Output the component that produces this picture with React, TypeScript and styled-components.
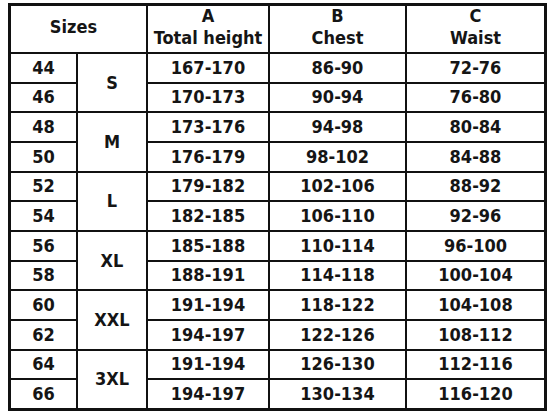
import React from "react";
import styled, { createGlobalStyle } from "styled-components";

const Global = createGlobalStyle`
  html, body { margin: 0; padding: 0; background: #ffffff; }
  body { width: 554px; height: 415px; overflow: hidden; }
`;

const Page = styled.div`
  padding: 3px 0 0 8px;
`;

const Chart = styled.div`
  display: grid;
  grid-template-columns: 65px 68px 120px 135px 137px;
  grid-template-rows: 46px repeat(12, 1fr);
  gap: 2px;
  width: 539px;
  height: 408px;
  box-sizing: border-box;
  padding: 3px;
  background: #111111;
  font-family: "DejaVu Sans Condensed", "DejaVu Sans", sans-serif;
  font-weight: bold;
  font-size: 18px;
  color: #151515;
`;

const Cell = styled.div<{ $span?: number; $rows?: number }>`
  background: #ffffff;
  display: flex;
  flex-direction: column;
  align-items: center;
  justify-content: center;
  text-align: center;
  line-height: 21px;
  padding-bottom: 1px;
  ${(p) => (p.$span ? `grid-column: span ${p.$span};` : "")}
  ${(p) => (p.$rows ? `grid-row: span ${p.$rows};` : "")}
`;

const HeadCell = styled(Cell)<{ $shift?: number }>`
  line-height: 22px;
  padding-bottom: 5px;
  padding-right: ${(p) => p.$shift ?? 0}px;
`;

const groups = [
  { size: "S", rows: [["44", "167-170", "86-90", "72-76"], ["46", "170-173", "90-94", "76-80"]] },
  { size: "M", rows: [["48", "173-176", "94-98", "80-84"], ["50", "176-179", "98-102", "84-88"]] },
  { size: "L", rows: [["52", "179-182", "102-106", "88-92"], ["54", "182-185", "106-110", "92-96"]] },
  { size: "XL", rows: [["56", "185-188", "110-114", "96-100"], ["58", "188-191", "114-118", "100-104"]] },
  { size: "XXL", rows: [["60", "191-194", "118-122", "104-108"], ["62", "194-197", "122-126", "108-112"]] },
  { size: "3XL", rows: [["64", "191-194", "126-130", "112-116"], ["66", "194-197", "130-134", "116-120"]] },
];

export default function App() {
  return (
    <>
      <Global />
      <Page>
        <Chart>
          <HeadCell $span={2} $shift={10}>Sizes</HeadCell>
          <HeadCell>
            <span>A</span>
            <span>Total height</span>
          </HeadCell>
          <HeadCell>
            <span>B</span>
            <span>Chest</span>
          </HeadCell>
          <HeadCell>
            <span>C</span>
            <span>Waist</span>
          </HeadCell>
          {groups.map((g) => (
            <React.Fragment key={g.size}>
              <Cell>{g.rows[0][0]}</Cell>
              <Cell $rows={2}>{g.size}</Cell>
              <Cell>{g.rows[0][1]}</Cell>
              <Cell>{g.rows[0][2]}</Cell>
              <Cell>{g.rows[0][3]}</Cell>
              <Cell>{g.rows[1][0]}</Cell>
              <Cell>{g.rows[1][1]}</Cell>
              <Cell>{g.rows[1][2]}</Cell>
              <Cell>{g.rows[1][3]}</Cell>
            </React.Fragment>
          ))}
        </Chart>
      </Page>
    </>
  );
}
